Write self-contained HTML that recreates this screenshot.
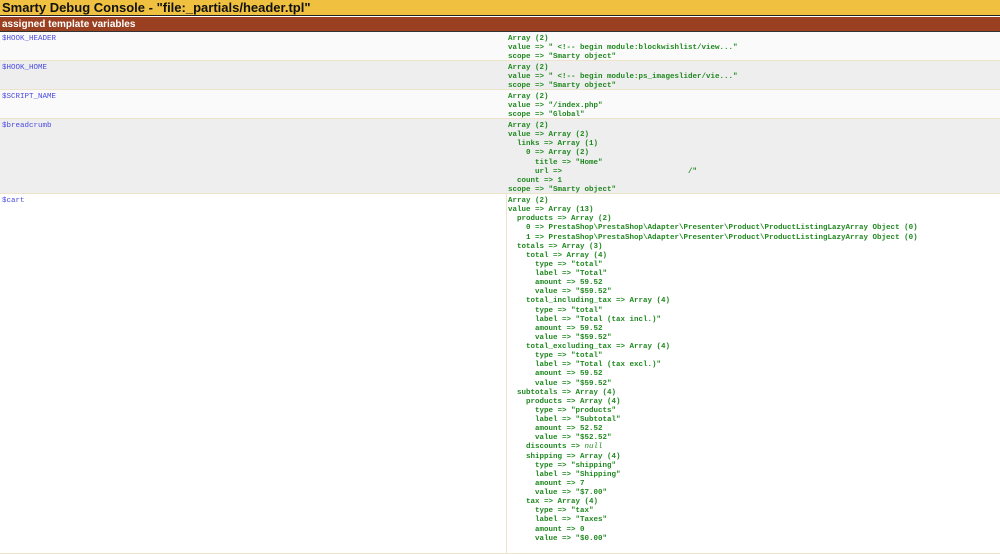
<!DOCTYPE html>
<html><head><style>
body{margin:0;width:1000px;height:544px;overflow:hidden;background:#fff;font-family:"Liberation Sans",sans-serif}
.h1{position:absolute;left:0;top:0;width:1000px;height:16px;background:#f0c040;border-bottom:1px solid #222;font-weight:bold;font-size:13px;line-height:16px;padding-left:2px;box-sizing:border-box;color:#111}
.h2{position:absolute;left:0;top:17px;width:1000px;height:15px;background:#9a4020;border-bottom:1px solid #333;color:#fff;font-weight:bold;font-size:10px;line-height:15px;padding-left:2px;box-sizing:border-box}
.row{position:absolute;left:0;width:1000px;border-bottom:1px solid #eee4cc;box-sizing:border-box}
.k{position:absolute;left:2px;top:3px;font:7.5px/9px "Liberation Mono",monospace;color:#4a4ae0}
pre{position:absolute;left:508px;top:3px;margin:0;font:bold 7.5px/9.13px "Liberation Mono",monospace;color:#1f881f}
.w{background:#fafafa}.g{background:#eeeeee}
.div{position:absolute;left:506px;top:0;bottom:0;width:1px;background:#eee4cc}
</style></head><body>
<div class="h1">Smarty Debug Console - "file:_partials/header.tpl"</div>
<div class="h2">assigned template variables</div>
<div class="row w" style="top:32px;height:29px"><span class="k">$HOOK_HEADER</span><pre>Array (2)
value =&gt; " &lt;!-- begin module:blockwishlist/view..."
scope =&gt; "Smarty object"</pre></div>
<div class="row g" style="top:61px;height:29px"><span class="k">$HOOK_HOME</span><pre>Array (2)
value =&gt; " &lt;!-- begin module:ps_imageslider/vie..."
scope =&gt; "Smarty object"</pre></div>
<div class="row w" style="top:90px;height:29px"><span class="k">$SCRIPT_NAME</span><pre>Array (2)
value =&gt; "/index.php"
scope =&gt; "Global"</pre></div>
<div class="row g" style="top:119px;height:75px"><span class="k">$breadcrumb</span><pre>Array (2)
value =&gt; Array (2)
  links =&gt; Array (1)
    0 =&gt; Array (2)
      title =&gt; "Home"
      url =&gt;                            /"
  count =&gt; 1
scope =&gt; "Smarty object"</pre></div>
<div class="row" style="top:194px;height:360px;background:#fff"><div class="div"></div><span class="k">$cart</span><pre>Array (2)
value =&gt; Array (13)
  products =&gt; Array (2)
    0 =&gt; PrestaShop\PrestaShop\Adapter\Presenter\Product\ProductListingLazyArray Object (0)
    1 =&gt; PrestaShop\PrestaShop\Adapter\Presenter\Product\ProductListingLazyArray Object (0)
  totals =&gt; Array (3)
    total =&gt; Array (4)
      type =&gt; "total"
      label =&gt; "Total"
      amount =&gt; 59.52
      value =&gt; "$59.52"
    total_including_tax =&gt; Array (4)
      type =&gt; "total"
      label =&gt; "Total (tax incl.)"
      amount =&gt; 59.52
      value =&gt; "$59.52"
    total_excluding_tax =&gt; Array (4)
      type =&gt; "total"
      label =&gt; "Total (tax excl.)"
      amount =&gt; 59.52
      value =&gt; "$59.52"
  subtotals =&gt; Array (4)
    products =&gt; Array (4)
      type =&gt; "products"
      label =&gt; "Subtotal"
      amount =&gt; 52.52
      value =&gt; "$52.52"
    discounts =&gt; <i style="font-weight:normal">null</i>
    shipping =&gt; Array (4)
      type =&gt; "shipping"
      label =&gt; "Shipping"
      amount =&gt; 7
      value =&gt; "$7.00"
    tax =&gt; Array (4)
      type =&gt; "tax"
      label =&gt; "Taxes"
      amount =&gt; 0
      value =&gt; "$0.00"</pre></div>
</body></html>
